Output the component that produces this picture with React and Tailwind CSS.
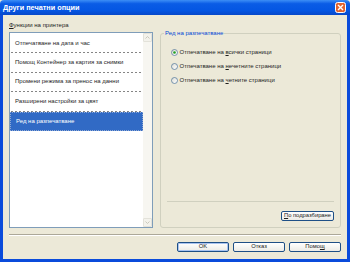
import React from "react";

const items = [
  "Отпечатване на дата и час",
  "Помощ Контейнер за картия за снимки",
  "Промени режима за пренос на данни",
  "Разширени настройки за цвят",
];

const Radio = ({ checked }) => (
  <svg width="7" height="7" viewBox="0 0 14 14" className="shrink-0">
    <defs>
      <linearGradient id="rg" x1="0" y1="0" x2="1" y2="1">
        <stop offset="0" stopColor="#DCDCD4" />
        <stop offset="1" stopColor="#FFFFFF" />
      </linearGradient>
    </defs>
    <circle cx="7" cy="7" r="6" fill="url(#rg)" stroke="#3A6690" strokeWidth="1.3" />
    {checked && <circle cx="7" cy="7" r="2.6" fill="#21A121" />}
  </svg>
);

const Arrow = ({ down }) => (
  <div className="h-[9px] border border-[#E3E2DA] bg-[#F3F2EC] rounded-[1px] flex items-center justify-center">
    <svg width="5" height="3" viewBox="0 0 5 3">
      <path d={down ? "M0.5 0.5 L2.5 2.5 L4.5 0.5" : "M0.5 2.5 L2.5 0.5 L4.5 2.5"} stroke="#C9C8BD" fill="none" strokeWidth="1" />
    </svg>
  </div>
);

const XpButton = ({ children, primary, className = "" }) => (
  <div
    className={`h-[10px] flex items-center justify-center rounded-[2px] border border-[#1E4F86] bg-[linear-gradient(#FFFFFF,#ECEBE6)] text-[5.8px] leading-none text-[#222] ${
      primary ? "shadow-[inset_0_0_0_1px_#A9C4F0]" : ""
    } ${className}`}
  >
    {children}
  </div>
);

export default function App() {
  return (
    <div className="w-[350px] h-[262px] flex flex-col bg-[#ECE9D8] font-['Liberation_Sans',Arial,sans-serif] text-[6px] text-[#1E1E1E] overflow-hidden">
      {/* title bar */}
      <div className="h-[15px] shrink-0 flex items-center justify-between pl-[3px] pr-[4px] rounded-t-[4px] bg-[linear-gradient(#3C8EF6,#0A5CE6_25%,#0456E3_70%,#0748C9)]">
        <span className="text-white font-bold text-[7.3px] leading-none">Други печатни опции</span>
        <svg width="11" height="11" viewBox="0 0 11 11" className="shrink-0">
          <rect x="0.5" y="0.5" width="10" height="10" rx="2" fill="#E2632F" stroke="#FFFFFF" strokeWidth="1" />
          <path d="M3 3 L8 8 M8 3 L3 8" stroke="#FFFFFF" strokeWidth="1.4" />
        </svg>
      </div>

      {/* body */}
      <div className="flex-1 flex flex-col border-x-[3px] border-b-[3px] border-[#0A4BDB] px-[6px] pt-[6px]">
        <div className="flex items-start">
          {/* left column */}
          <div className="w-[144px] flex flex-col">
            <div className="h-[8px] leading-[8px] mb-[3px]">
              <span className="underline">Ф</span>ункции на принтера
            </div>
            <div className="h-[196px] flex border border-[#7F9DB9] bg-white">
              <div className="flex-1 flex flex-col pt-[1px]">
                {items.map((t) => (
                  <div key={t} className="flex flex-col">
                    <div className="h-[18.4px] flex items-center pl-[5px]">{t}</div>
                    <div className="mx-[1px] h-[1px] bg-[repeating-linear-gradient(90deg,#858585_0_2px,transparent_2px_4px)]" />
                  </div>
                ))}
                <div className="h-[19px] flex items-center pl-[5px] bg-[#316AC5] text-white border border-dotted border-[#8FA8D4]">
                  Ред на разпечатване
                </div>
              </div>
              <div className="w-[9px] flex flex-col justify-between bg-[#F7F6F1]">
                <Arrow />
                <Arrow down />
              </div>
            </div>
          </div>

          {/* right group box */}
          <fieldset className="ml-[7px] mt-[8px] w-[181px] h-[199px] border border-[#D0D0BF] rounded-[3px]">
            <legend className="ml-[3px] px-[1px] text-[#0046D5] h-[8px] leading-[8px]">Ред на разпечатване</legend>
            <div className="h-[189px] flex flex-col pt-[8px]">
              <div className="h-[14px] flex items-center gap-[1.5px] pl-[10px]">
                <Radio checked />
                <span>
                  Отпечатване на <span className="underline">в</span>сички страници
                </span>
              </div>
              <div className="h-[14px] flex items-center gap-[1.5px] pl-[10px]">
                <Radio />
                <span>
                  Отпечатване на <span className="underline">н</span>ечетните страници
                </span>
              </div>
              <div className="h-[14px] flex items-center gap-[1.5px] pl-[10px]">
                <Radio />
                <span>
                  Отпечатване на <span className="underline">ч</span>етните страници
                </span>
              </div>
              <div className="mt-auto mx-[6px] h-[1px] bg-[#D0D0BF]" />
              <div className="flex justify-end mr-[6px] mt-[9px] mb-[5px]">
                <XpButton className="w-[53px]">
                  <span className="underline">П</span>о подразбиране
                </XpButton>
              </div>
            </div>
          </fieldset>
        </div>

        {/* separator */}
        <div className="mt-[6px] h-[1px] bg-[#ACA899]" />
        <div className="h-[1px] bg-white" />

        {/* buttons */}
        <div className="flex justify-end gap-[4px] mt-[6px]">
          <XpButton primary className="w-[52px]">OK</XpButton>
          <XpButton className="w-[52px]">Отказ</XpButton>
          <XpButton className="w-[52px]">
            Помо<span className="underline">щ</span>
          </XpButton>
        </div>
      </div>
    </div>
  );
}
